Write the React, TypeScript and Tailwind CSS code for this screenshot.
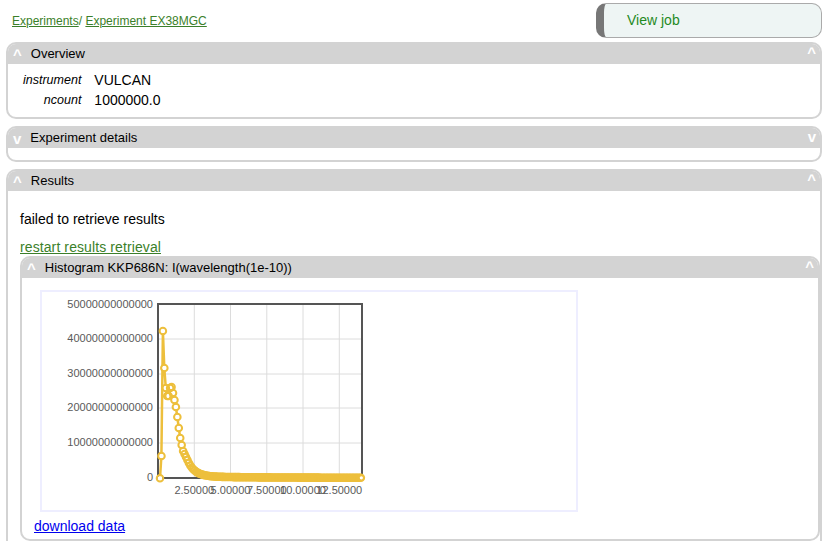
import type { ReactNode } from 'react';

const GOLD = '#edbf3c';

// chart geometry, in svg coordinates (svg sits at x 42, y 292 on the page)
const OX = 42;
const OY = 292;
const PLOT = { left: 116, right: 320, top: 12, bottom: 186 };

const yTicks = [
  { label: '50000000000000', y: 13 },
  { label: '40000000000000', y: 47 },
  { label: '30000000000000', y: 82 },
  { label: '20000000000000', y: 116 },
  { label: '10000000000000', y: 151 },
  { label: '0', y: 186 },
];

const xTicks = [
  { label: '2.50000', x: 194.3 - OX },
  { label: '5.00000', x: 230.5 - OX },
  { label: '7.50000', x: 266.8 - OX },
  { label: '10.00000', x: 303 - OX },
  { label: '12.50000', x: 339.3 - OX },
];

// first points read off the plot (page y), then an exponential tail
const head = [478.3, 456, 331, 368, 388, 396, 396, 388, 387, 393, 400, 407, 417, 428, 438, 445, 451, 454, 457, 460];

function buildPoints() {
  const pts: { x: number; y: number }[] = [];
  for (let i = 0; i < 140; i++) {
    const x = 160 + i * 1.445;
    let y: number;
    if (i < head.length) {
      y = head[i];
    } else {
      const off = 16.5 * Math.exp(-(i - 19) / 5) + 1.5 * Math.exp(-(i - 19) / 60);
      y = 478 - off;
    }
    pts.push({ x: x - OX, y: y - OY });
  }
  return pts;
}

const points = buildPoints();

function Chart() {
  const last = points[points.length - 1];
  const line = points.map(p => `${p.x.toFixed(1)},${p.y.toFixed(1)}`).join(' ');
  const vGrid = xTicks.map(t => t.x);
  const hGrid = yTicks.slice(1, 5).map(t => t.y);

  return (
    <svg width={534} height={218} className="block">
      {vGrid.map(x => (
        <line key={x} x1={x} x2={x} y1={PLOT.top} y2={PLOT.bottom} stroke="#dcdcdc" strokeWidth={1} />
      ))}
      {hGrid.map(y => (
        <line key={y} x1={PLOT.left} x2={PLOT.right} y1={y} y2={y} stroke="#dcdcdc" strokeWidth={1} />
      ))}
      <rect
        x={PLOT.left}
        y={PLOT.top}
        width={PLOT.right - PLOT.left}
        height={PLOT.bottom - PLOT.top}
        fill="none"
        stroke="#555"
        strokeWidth={2}
      />
      {yTicks.map(t => (
        <text
          key={t.label}
          x={111}
          y={t.y}
          textAnchor="end"
          dominantBaseline="middle"
          fontSize={11}
          fill="#5a5a5a"
          fontFamily="'Liberation Sans', Arial, sans-serif"
        >
          {t.label}
        </text>
      ))}
      {xTicks.map(t => (
        <text
          key={t.label}
          x={t.x}
          y={199}
          textAnchor="middle"
          dominantBaseline="middle"
          fontSize={11}
          fill="#5a5a5a"
          fontFamily="'Liberation Sans', Arial, sans-serif"
        >
          {t.label}
        </text>
      ))}
      <polyline points={line} fill="none" stroke={GOLD} strokeWidth={2.5} strokeLinejoin="round" />
      <g fill="#fff">
        {points.map((p, i) => (
          <circle key={i} cx={p.x} cy={p.y} r={2.4} />
        ))}
      </g>
      <g fill="none" stroke={GOLD} strokeWidth={2}>
        {points.map((p, i) => (
          <circle key={i} cx={p.x} cy={p.y} r={3.3} />
        ))}
      </g>
      <circle cx={last.x} cy={last.y} r={3.3} fill={GOLD} />
      <circle cx={last.x + 0.5} cy={last.y} r={1.6} fill="#fff" />
    </svg>
  );
}

function Caret({ open }: { open: boolean }) {
  return <span className="text-[15px] font-bold leading-none text-white">{open ? '^' : 'v'}</span>;
}

function Panel({
  title,
  open = true,
  children,
  className = '',
}: {
  title: string;
  open?: boolean;
  children?: ReactNode;
  className?: string;
}) {
  return (
    <div className={`overflow-hidden rounded-[10px] border-2 border-[#d3d3d3] bg-white ${className}`}>
      <div className="flex h-[20px] items-center bg-[#d3d3d3] pl-[5px] pr-[4px] text-[13px] text-black">
        <Caret open={open} />
        <span className="ml-[9px]">{title}</span>
        <span className="ml-auto">
          <Caret open={open} />
        </span>
      </div>
      {children}
    </div>
  );
}

export default function App() {
  return (
    <div className="min-h-[544px] w-[828px] bg-white font-['Liberation_Sans',Arial,sans-serif] text-black">
      {/* top bar */}
      <div className="mt-[3px] mb-[4px] flex h-[35px] items-center justify-between pl-[12px] pr-[6px]">
        <div className="text-[12px] text-[#3b7f2a]">
          <a href="#" className="underline">Experiments</a>/{' '}
          <a href="#" className="underline">Experiment EX38MGC</a>
        </div>
        <div className="flex h-[35px] w-[226px] items-center rounded-[10px] border border-l-[8px] border-[#aaa] border-l-[#777] bg-[#eef5f4] pl-[23px] text-[14px] text-[#1f8a1f]">
          View job
        </div>
      </div>

      <div className="flex flex-col gap-[7px] px-[6px]">
        <Panel title="Overview">
          <div className="grid w-fit grid-cols-[auto_auto] gap-x-[13px] pl-[15px] pt-[6px] pb-[7px]">
            <div className="h-[20px] text-right text-[12.5px] italic leading-[20px]">instrument</div>
            <div className="h-[20px] text-[14px] leading-[20px]">VULCAN</div>
            <div className="h-[20px] text-right text-[12.5px] italic leading-[20px]">ncount</div>
            <div className="h-[20px] text-[14px] leading-[20px]">1000000.0</div>
          </div>
        </Panel>

        <Panel title="Experiment details" open={false}>
          <div className="h-[12px]" />
        </Panel>

        <Panel title="Results" className="rounded-b-none border-b-0">
          <div className="pl-[12px] pt-[18px]">
            <p className="text-[14px] leading-[20px]">failed to retrieve results</p>
            <a href="#" className="mt-[10px] block w-fit text-[14px] leading-[17px] tracking-[0.1px] text-[#3b7f2a] underline">
              restart results retrieval
            </a>
            <Panel title="Histogram KKP686N: I(wavelength(1e-10))">
              <div className="pl-[18px] pt-[12px] pb-[4px]">
                <div className="w-fit border-2 border-[#eeeeff]">
                  <Chart />
                </div>
                <a href="#" className="-ml-[6px] mt-[5px] block w-fit text-[14px] leading-[18px] text-[#0000ee] underline">
                  download data
                </a>
              </div>
            </Panel>
          </div>
        </Panel>
      </div>
    </div>
  );
}
